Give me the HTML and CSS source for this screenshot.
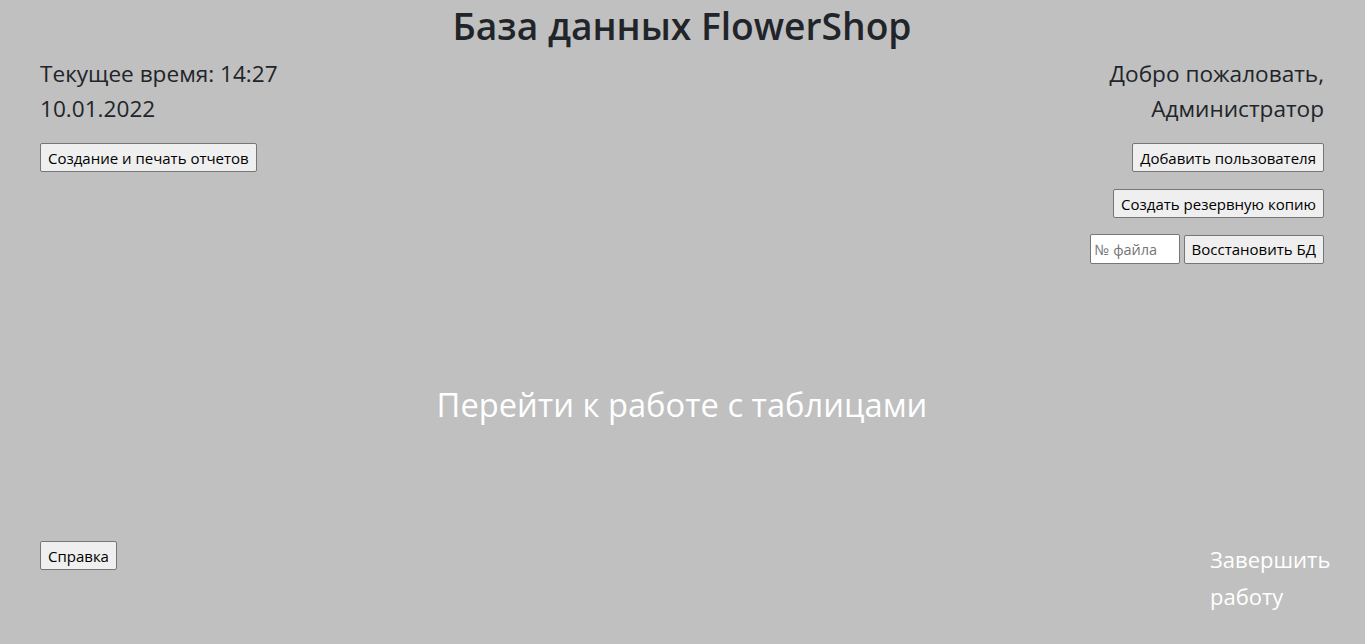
FILE: index.html
```html
<!DOCTYPE html>
<html lang="ru">
<head>
<meta charset="utf-8">
<title>FlowerShop</title>
<link rel="stylesheet" href="styles.css">
</head>
<body>
<div class="page">
  <h1 class="title">База данных FlowerShop</h1>
  <div class="top">
    <div class="left">
      <div class="info">Текущее время: 14:27</div>
      <div class="info">10.01.2022</div>
      <button class="btn btn-first">Создание и печать отчетов</button>
    </div>
    <div class="right">
      <div class="info">Добро пожаловать,</div>
      <div class="info">Администратор</div>
      <button class="btn btn-first">Добавить пользователя</button>
      <button class="btn btn-next">Создать резервную копию</button>
      <div class="restore">
        <input class="file-input" type="text" placeholder="№ файла">
        <button class="btn">Восстановить БД</button>
      </div>
    </div>
  </div>
  <div class="middle">
    <a class="tables-link">Перейти к работе с таблицами</a>
  </div>
  <div class="bottom">
    <button class="btn">Справка</button>
    <a class="exit-link">Завершить работу</a>
  </div>
</div>
</body>
</html>
```
FILE: styles.css
```css
* { box-sizing: border-box; }
html, body { margin: 0; padding: 0; }
body {
  background: #c0c0c0;
  color: #212529;
  font-family: "Open Sans", "Noto Sans", sans-serif;
  width: 1365px;
  height: 644px;
  overflow: hidden;
}
.page {
  padding: 0 41px 0 40px;
  display: flex;
  flex-direction: column;
  height: 644px;
}
.title {
  margin: 0;
  text-align: center;
  font-size: 37.2px;
  font-weight: 600;
  line-height: 52px;
  height: 56px;
}
.top {
  display: flex;
  justify-content: space-between;
  align-items: flex-start;
}
.left, .right {
  display: flex;
  flex-direction: column;
}
.left { align-items: flex-start; }
.right { align-items: flex-end; }
.info {
  font-size: 22.6px;
  line-height: 35px;
}
.btn {
  font-family: "Open Sans", "Noto Sans", sans-serif;
  font-size: 15px;
  line-height: 20px;
  height: 29px;
  padding: 1px 7px;
  background: #efefef;
  border: 1px solid #767676;
  border-radius: 2px;
  color: #000;
  white-space: nowrap;
}
.btn-first { margin-top: 17px; }
.btn-next { margin-top: 17px; }
.restore {
  display: flex;
  gap: 4px;
  margin-top: 16px;
  align-items: center;
}
.file-input {
  width: 90px;
  height: 30px;
  border: 1px solid #767676;
  border-radius: 2px;
  background: #fff;
  font-family: "Open Sans", "Noto Sans", sans-serif;
  font-size: 14.5px;
  padding: 1px 4px;
}
.file-input::placeholder { color: #757575; font-style: normal; }
.middle {
  margin-top: 119px;
  text-align: center;
}
.tables-link {
  color: #fff;
  font-size: 32.7px;
  line-height: 44px;
}
.bottom {
  margin-top: 114px;
  display: flex;
  justify-content: space-between;
  align-items: flex-start;
}
.exit-link {
  color: #fff;
  font-size: 22px;
  line-height: 37px;
  width: 120px;
  margin-right: -6px;
  margin-top: 0;
}
```
